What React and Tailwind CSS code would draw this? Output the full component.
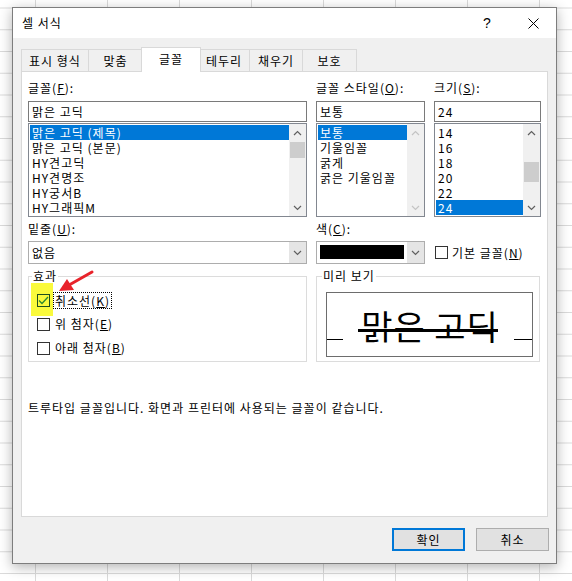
import React from "react";

const font = "font-['Noto_Sans_CJK_KR','Noto_Sans',sans-serif]";

function Chevron({ up = false, color = "#606060" }) {
  return (
    <svg width="9" height="6" viewBox="0 0 9 6">
      <path
        d={up ? "M1 5 L4.5 1.5 L8 5" : "M1 1 L4.5 4.5 L8 1"}
        fill="none"
        stroke={color}
        strokeWidth="1.2"
      />
    </svg>
  );
}

function ScrollBar({ thumb, disabled }) {
  const c = disabled ? "#c4c4c4" : "#606060";
  return (
    <div className="w-[17px] h-full bg-[#f0f0f0] flex flex-col">
      <div className="h-[17px] flex items-center justify-center">
        <Chevron up color={c} />
      </div>
      <div className="flex-1 relative">
        {!disabled && <div className={`absolute left-[1px] right-[1px] bg-[#cdcdcd] ${thumb}`} />}
      </div>
      <div className="h-[17px] flex items-center justify-center">
        <Chevron color={c} />
      </div>
    </div>
  );
}

function ListBox({ items, selected, thumb, disabled }) {
  return (
    <div className="mt-[1px] h-[94px] border border-[#828790] bg-white flex">
      <div className="flex-1 pt-[1px] pl-[1px]">
        {items.map((it, i) => (
          <div
            key={it}
            className={`h-[15px] leading-[15px] pl-[2px] whitespace-nowrap ${
              i === selected ? "bg-[#0078d7] text-white" : ""
            }`}
          >
            {it}
          </div>
        ))}
      </div>
      <ScrollBar thumb={thumb} disabled={disabled} />
    </div>
  );
}

function Label({ text, k, tail = "):" }) {
  return (
    <div className="h-[14px] leading-[14px] whitespace-nowrap">
      {text}(<u>{k}</u>
      {tail}
    </div>
  );
}

function Box({ checked }) {
  return (
    <span
      className={`w-[13px] h-[13px] border flex items-center justify-center shrink-0 ${
        checked ? "border-[#1f4f1f]" : "border-[#333333] bg-white"
      }`}
    >
      {checked && (
        <svg width="11" height="9" viewBox="0 0 11 9">
          <path d="M1 4.5 L4 7.5 L10 1" fill="none" stroke="#2f8a2f" strokeWidth="1.3" />
        </svg>
      )}
    </span>
  );
}

function Tab({ label, w, active }) {
  return active ? (
    <div
      className={`${w} h-[25px] -mb-px -mx-[2px] relative z-10 bg-white border border-b-0 border-[#d9d9d9] flex items-center justify-center pb-[2px]`}
    >
      {label}
    </div>
  ) : (
    <div
      className={`${w} h-[22px] -ml-px first:ml-0 bg-[#f0f0f0] border border-b-0 border-[#d9d9d9] flex items-center justify-center`}
    >
      {label}
    </div>
  );
}

export default function App() {
  return (
    <div
      className={`w-[572px] h-[581px] overflow-hidden relative pt-[7px] pl-[12px] bg-white bg-[linear-gradient(to_right,#dadada_1px,transparent_1px),linear-gradient(to_bottom,#dadada_1px,transparent_1px)] bg-size-[72px_21.75px] bg-position-[35px_7.5px] ${font} text-[12px] tracking-[1px] text-black`}
    >
      <div className="w-[545px] h-[557px] border border-[#7d7d7d] bg-[#f0f0f0] shadow-[0_3px_12px_rgba(0,0,0,0.3)] flex flex-col">
        {/* title bar */}
        <div className="h-[30px] bg-white flex items-center pl-[9px]">
          <span>셀 서식</span>
          <div className="ml-auto flex">
            <div className="w-[46px] h-[30px] flex items-center justify-center text-[14px] tracking-normal font-['Liberation_Sans',sans-serif]">
              ?
            </div>
            <div className="w-[46px] h-[30px] flex items-center justify-center">
              <svg width="11" height="11" viewBox="0 0 11 11">
                <path d="M0.5 0.5 L10.5 10.5 M10.5 0.5 L0.5 10.5" stroke="#000" strokeWidth="1" />
              </svg>
            </div>
          </div>
        </div>

        {/* tabs */}
        <div className="mt-[8px] ml-[8px] flex items-end h-[25px]">
          <Tab label="표시 형식" w="w-[68px]" />
          <Tab label="맞춤" w="w-[55px]" />
          <Tab label="글꼴" w="w-[60px]" active />
          <Tab label="테두리" w="w-[52px]" />
          <Tab label="채우기" w="w-[54px]" />
          <Tab label="보호" w="w-[55px]" />
        </div>

        {/* panel */}
        <div className="mx-[8px] h-[446px] border border-[#d9d9d9] bg-white px-[6px] pt-[9px] relative">
          <div className="flex">
            <div className="w-[279px]">
              <Label text="글꼴" k="F" />
              <div className="mt-[6px] h-[21px] border border-[#7a7a7a] pl-[3px] leading-[19px]">맑은 고딕</div>
              <ListBox
                items={["맑은 고딕 (제목)", "맑은 고딕 (본문)", "HY견고딕", "HY견명조", "HY궁서B", "HY그래픽M"]}
                selected={0}
                thumb="top-[1px] h-[16px]"
              />
            </div>
            <div className="w-[109px] ml-[9px]">
              <Label text="글꼴 스타일" k="O" />
              <div className="mt-[6px] h-[21px] border border-[#7a7a7a] pl-[3px] leading-[19px]">보통</div>
              <ListBox items={["보통", "기울임꼴", "굵게", "굵은 기울임꼴"]} selected={0} disabled />
            </div>
            <div className="w-[107px] ml-[9px]">
              <Label text="크기" k="S" />
              <div className="mt-[6px] h-[21px] border border-[#7a7a7a] pl-[3px] leading-[19px]">24</div>
              <ListBox items={["14", "16", "18", "20", "22", "24"]} selected={5} thumb="top-[21px] h-[20px]" />
            </div>
          </div>

          <div className="flex mt-[5px]">
            <div className="w-[279px]">
              <Label text="밑줄" k="U" />
              <div className="mt-[5px] h-[23px] border border-[#adadad] bg-white flex">
                <div className="flex-1 pl-[3px] leading-[21px]">없음</div>
                <div className="w-[17px] bg-[#e5e5e5] flex items-center justify-center">
                  <Chevron />
                </div>
              </div>
            </div>
            <div className="w-[109px] ml-[9px]">
              <Label text="색" k="C" />
              <div className="mt-[5px] h-[23px] border border-[#adadad] bg-white flex">
                <div className="flex-1 pl-[3px] pt-[3px]">
                  <div className="w-[84px] h-[14px] bg-black" />
                </div>
                <div className="w-[17px] bg-[#e5e5e5] flex items-center justify-center">
                  <Chevron />
                </div>
              </div>
            </div>
            <div className="w-[107px] ml-[9px] pt-[19px]">
              <div className="h-[23px] flex items-center gap-[4px] pl-px">
                <Box />
                <span>
                  기본 글꼴(<u>N</u>)
                </span>
              </div>
            </div>
          </div>

          <div className="flex mt-[5px]">
            <fieldset className="w-[279px] h-[93px] border border-[#dcdcdc] p-0 m-0">
              <legend className="ml-[3px] px-[1px] leading-[14px]">효과</legend>
              <div className="pt-[5px] pl-[8px]">
                <div className="h-[24px] flex items-center relative">
                  <span className="absolute left-[-6px] top-[-5px] w-[22px] h-[33px] bg-[#fafa3c]" />
                  <span className="relative">
                    <Box checked />
                  </span>
                  <span className="ml-[3px] h-[17px] leading-[15px] px-[1px] border border-dotted border-black relative">
                    취소선(<u>K</u>)
                  </span>
                </div>
                <div className="h-[24px] flex items-center">
                  <Box />
                  <span className="ml-[3px] px-[1px] border border-transparent">
                    위 첨자(<u>E</u>)
                  </span>
                </div>
                <div className="h-[24px] flex items-center">
                  <Box />
                  <span className="ml-[3px] px-[1px] border border-transparent">
                    아래 첨자(<u>B</u>)
                  </span>
                </div>
              </div>
            </fieldset>
            <fieldset className="w-[224px] ml-[9px] h-[93px] border border-[#dcdcdc] p-0 m-0">
              <legend className="ml-[5px] px-[1px] leading-[14px]">미리 보기</legend>
              <div className="ml-[9px] mt-[9px] w-[207px] h-[65px] border border-[#6d6d6d] relative flex items-center justify-center">
                <span className="absolute left-0 top-[46px] w-[16px] h-px bg-black" />
                <span className="absolute right-0 top-[46px] w-[18px] h-px bg-black" />
                <span className="text-[34px] leading-[40px] tracking-[1px] pt-[3px] pl-[1px]">맑은 고딕</span>
                <span className="absolute left-[31px] top-[36px] w-[140px] h-[3px] bg-black" />
              </div>
            </fieldset>
          </div>

          <div className="mt-[39px] leading-[14px]">
            트루타입 글꼴입니다. 화면과 프린터에 사용되는 글꼴이 같습니다.
          </div>
        </div>

        {/* buttons */}
        <div className="flex justify-end gap-[11px] mt-[11px] pr-[7px]">
          <button className="w-[73px] h-[23px] border-2 border-[#0078d7] bg-[#e1e1e1] leading-[19px]">확인</button>
          <button className="w-[73px] h-[23px] border border-[#adadad] bg-[#e1e1e1] leading-[21px]">취소</button>
        </div>
      </div>

      {/* red annotation arrow */}
      <svg className="absolute left-0 top-0 pointer-events-none" width="572" height="581" viewBox="0 0 572 581">
        <line x1="92" y1="272" x2="70" y2="284.5" stroke="#e8232b" strokeWidth="3" strokeLinecap="round" />
        <polygon points="59,291 67,279 74,290" fill="#e8232b" />
      </svg>
    </div>
  );
}
